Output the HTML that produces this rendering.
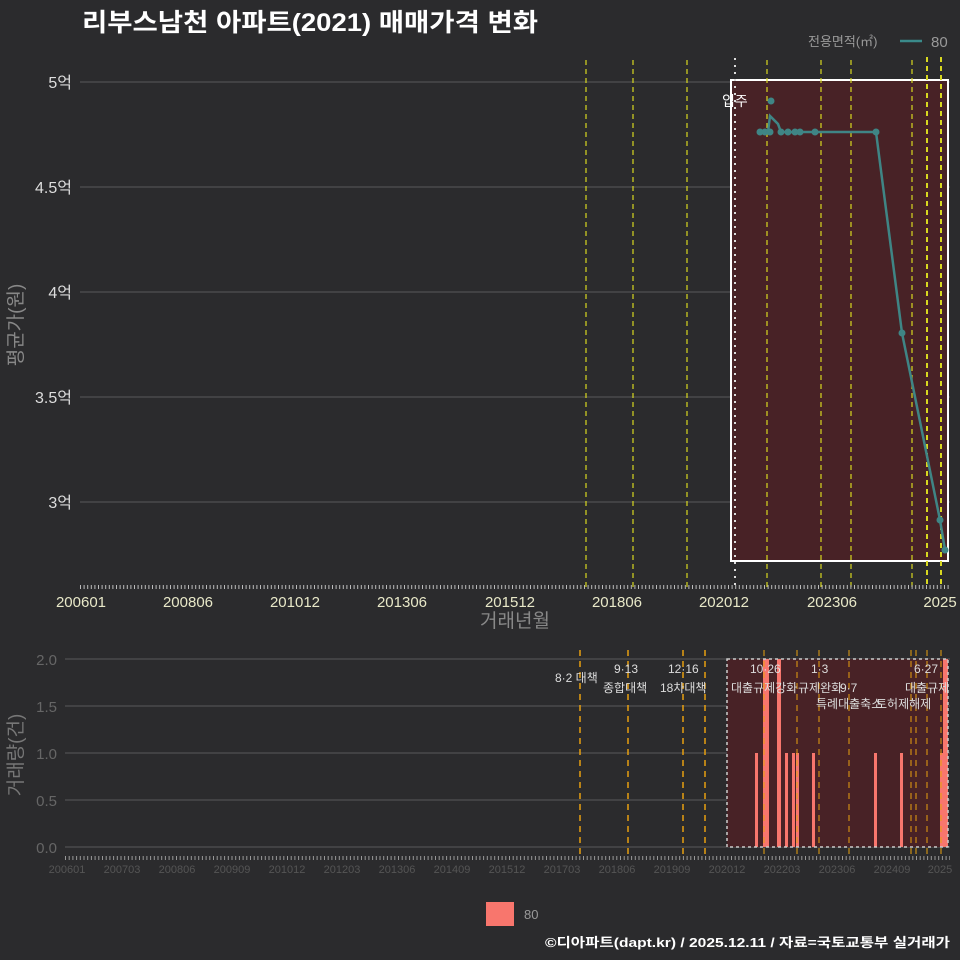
<!DOCTYPE html>
<html><head><meta charset="utf-8"><style>
body{margin:0;background:#2b2b2d;}
svg{display:block;font-family:"Liberation Sans","Noto Sans CJK KR",sans-serif;}
</style></head><body>
<svg width="960" height="960" viewBox="0 0 960 960">
<rect width="960" height="960" fill="#2b2b2d"/>
<text x="82" y="31" font-size="25" font-weight="bold" fill="#fff" textLength="456" lengthAdjust="spacingAndGlyphs">리부스남천 아파트(2021) 매매가격 변화</text>
<text x="808" y="46" font-size="13" fill="#999">전용면적(㎡)</text>
<line x1="900" y1="41" x2="922" y2="41" stroke="#3a8a8a" stroke-width="2.5"/>
<text x="931" y="47" font-size="15" fill="#999">80</text>
<!-- top chart -->
<g stroke="#5a5a5a" stroke-width="1">
<line x1="80" y1="82" x2="950" y2="82"/><line x1="80" y1="187" x2="950" y2="187"/>
<line x1="80" y1="292" x2="950" y2="292"/><line x1="80" y1="397" x2="950" y2="397"/>
<line x1="80" y1="502" x2="950" y2="502"/>
</g>
<rect x="731" y="80" width="217" height="481" fill="#482226" stroke="#fff" stroke-width="2"/>
<g stroke="#d8d820" stroke-width="1.2" stroke-dasharray="5,4">
<line x1="586" y1="60" x2="586" y2="587"/><line x1="633" y1="60" x2="633" y2="587"/>
<line x1="687" y1="60" x2="687" y2="587"/><line x1="767" y1="60" x2="767" y2="587"/>
<line x1="821" y1="60" x2="821" y2="587"/><line x1="851" y1="60" x2="851" y2="587"/>
<line x1="912" y1="60" x2="912" y2="587"/>
<line x1="927" y1="57" x2="927" y2="587" stroke-width="2"/><line x1="941" y1="57" x2="941" y2="587" stroke-width="2"/>
</g>
<line x1="735" y1="58" x2="735" y2="587" stroke="#ddd" stroke-width="2" stroke-dasharray="2,5"/>
<text x="722" y="106" font-size="14" fill="#fff">입주</text>
<polyline points="760,132 768,132 770,116 778,124 781,132 876,132 902,333 940,520 945,550" fill="none" stroke="#3f8585" stroke-width="2.5"/>
<g fill="#3f8585">
<circle cx="760" cy="132" r="3.5"/><circle cx="765" cy="132" r="3.5"/><circle cx="770" cy="132" r="3.5"/>
<circle cx="771" cy="101" r="3.5"/><circle cx="781" cy="132" r="3.5"/><circle cx="788" cy="132" r="3.5"/>
<circle cx="795" cy="132" r="3.5"/><circle cx="800" cy="132" r="3.5"/><circle cx="815" cy="132" r="3.5"/>
<circle cx="876" cy="132" r="3.5"/><circle cx="902" cy="333" r="3.5"/><circle cx="940" cy="520" r="3.5"/><circle cx="945" cy="550" r="3.5"/>
</g>
<g font-size="16" fill="#ddd" text-anchor="end">
<text x="72" y="88">5억</text><text x="72" y="193">4.5억</text><text x="72" y="298">4억</text>
<text x="72" y="403">3.5억</text><text x="72" y="508">3억</text>
</g>
<line x1="80" y1="587" x2="950" y2="587" stroke="#bbb" stroke-width="4" stroke-dasharray="1,2.6"/>
<g font-size="15" fill="#e8e8c8" text-anchor="middle">
<text x="81" y="607">200601</text><text x="188" y="607">200806</text><text x="295" y="607">201012</text>
<text x="402" y="607">201306</text><text x="510" y="607">201512</text><text x="617" y="607">201806</text>
<text x="724" y="607">202012</text><text x="832" y="607">202306</text><text x="940" y="607">2025</text>
</g>
<text x="515" y="627" font-size="19" fill="#888" text-anchor="middle">거래년월</text>
<text transform="translate(22,325) rotate(-90)" font-size="19" fill="#888" text-anchor="middle">평균가(원)</text>
<!-- bottom chart -->
<g stroke="#5a5a5a" stroke-width="1">
<line x1="65" y1="659" x2="950" y2="659"/><line x1="65" y1="706" x2="950" y2="706"/>
<line x1="65" y1="753" x2="950" y2="753"/><line x1="65" y1="800" x2="950" y2="800"/>
<line x1="65" y1="847" x2="950" y2="847"/>
</g>
<rect x="727" y="659" width="221" height="188" fill="#482226"/>
<g fill="#f8766d">
<rect x="755" y="753" width="3" height="94"/><rect x="763" y="659" width="6" height="188"/>
<rect x="777" y="659" width="4" height="188"/><rect x="785" y="753" width="3" height="94"/>
<rect x="792" y="753" width="3" height="94"/><rect x="796" y="753" width="3" height="94"/>
<rect x="812" y="753" width="3" height="94"/><rect x="874" y="753" width="3" height="94"/>
<rect x="900" y="753" width="3" height="94"/><rect x="940" y="753" width="3" height="94"/>
<rect x="943" y="659" width="5" height="188"/>
</g>
<rect x="727" y="659" width="221" height="188" fill="none" stroke="#ccc" stroke-width="1.5" stroke-dasharray="3,3"/>
<g stroke="#e8a010" stroke-width="1.5" stroke-dasharray="6,5">
<line x1="580" y1="650" x2="580" y2="857"/><line x1="628" y1="650" x2="628" y2="857"/>
<line x1="683" y1="650" x2="683" y2="857"/><line x1="705" y1="650" x2="705" y2="857"/>
<line x1="764" y1="650" x2="764" y2="857" stroke-width="1"/><line x1="797" y1="650" x2="797" y2="857" stroke-width="1"/>
<line x1="819" y1="650" x2="819" y2="857" stroke-width="1"/><line x1="849" y1="650" x2="849" y2="857" stroke-width="1"/>
<line x1="911" y1="650" x2="911" y2="857" stroke-width="1"/><line x1="916" y1="650" x2="916" y2="857" stroke-width="1"/>
<line x1="927" y1="650" x2="927" y2="857" stroke-width="1"/><line x1="941" y1="650" x2="941" y2="857" stroke-width="1"/>
</g>
<g font-size="12" fill="#ddd">
<text x="555" y="682">8·2 대책</text><text x="614" y="673">9·13</text><text x="603" y="692">종합대책</text>
<text x="668" y="673">12·16</text><text x="660" y="692">18차대책</text>
<text x="750" y="673">10·26</text><text x="731" y="692">대출규제강화</text><text x="811" y="673">1·3</text>
<text x="798" y="692">규제완화</text><text x="840" y="692">9·7</text><text x="816" y="708">특례대출축소</text>
<text x="876" y="708">토허제해제</text><text x="914" y="673">6·27</text><text x="905" y="692">대출규제</text>
</g>
<g font-size="15" fill="#666" text-anchor="end">
<text x="57" y="665">2.0</text><text x="57" y="712">1.5</text><text x="57" y="759">1.0</text>
<text x="57" y="806">0.5</text><text x="57" y="853">0.0</text>
</g>
<text transform="translate(22,755) rotate(-90)" font-size="19" fill="#777" text-anchor="middle">거래량(건)</text>
<line x1="65" y1="858" x2="950" y2="858" stroke="#999" stroke-width="4" stroke-dasharray="1,2.7"/>
<g font-size="11" fill="#555" text-anchor="middle">
<text x="67" y="873">200601</text><text x="122" y="873">200703</text><text x="177" y="873">200806</text>
<text x="232" y="873">200909</text><text x="287" y="873">201012</text><text x="342" y="873">201203</text>
<text x="397" y="873">201306</text><text x="452" y="873">201409</text><text x="507" y="873">201512</text>
<text x="562" y="873">201703</text><text x="617" y="873">201806</text><text x="672" y="873">201909</text>
<text x="727" y="873">202012</text><text x="782" y="873">202203</text><text x="837" y="873">202306</text>
<text x="892" y="873">202409</text><text x="940" y="873">2025</text>
</g>
<rect x="486" y="902" width="28" height="24" fill="#f8766d"/>
<text x="524" y="919" font-size="13" fill="#999">80</text>
<text x="545" y="947" font-size="13" font-weight="bold" fill="#fff" textLength="405" lengthAdjust="spacingAndGlyphs">©디아파트(dapt.kr) / 2025.12.11 / 자료=국토교통부 실거래가</text>
</svg>
</body></html>
